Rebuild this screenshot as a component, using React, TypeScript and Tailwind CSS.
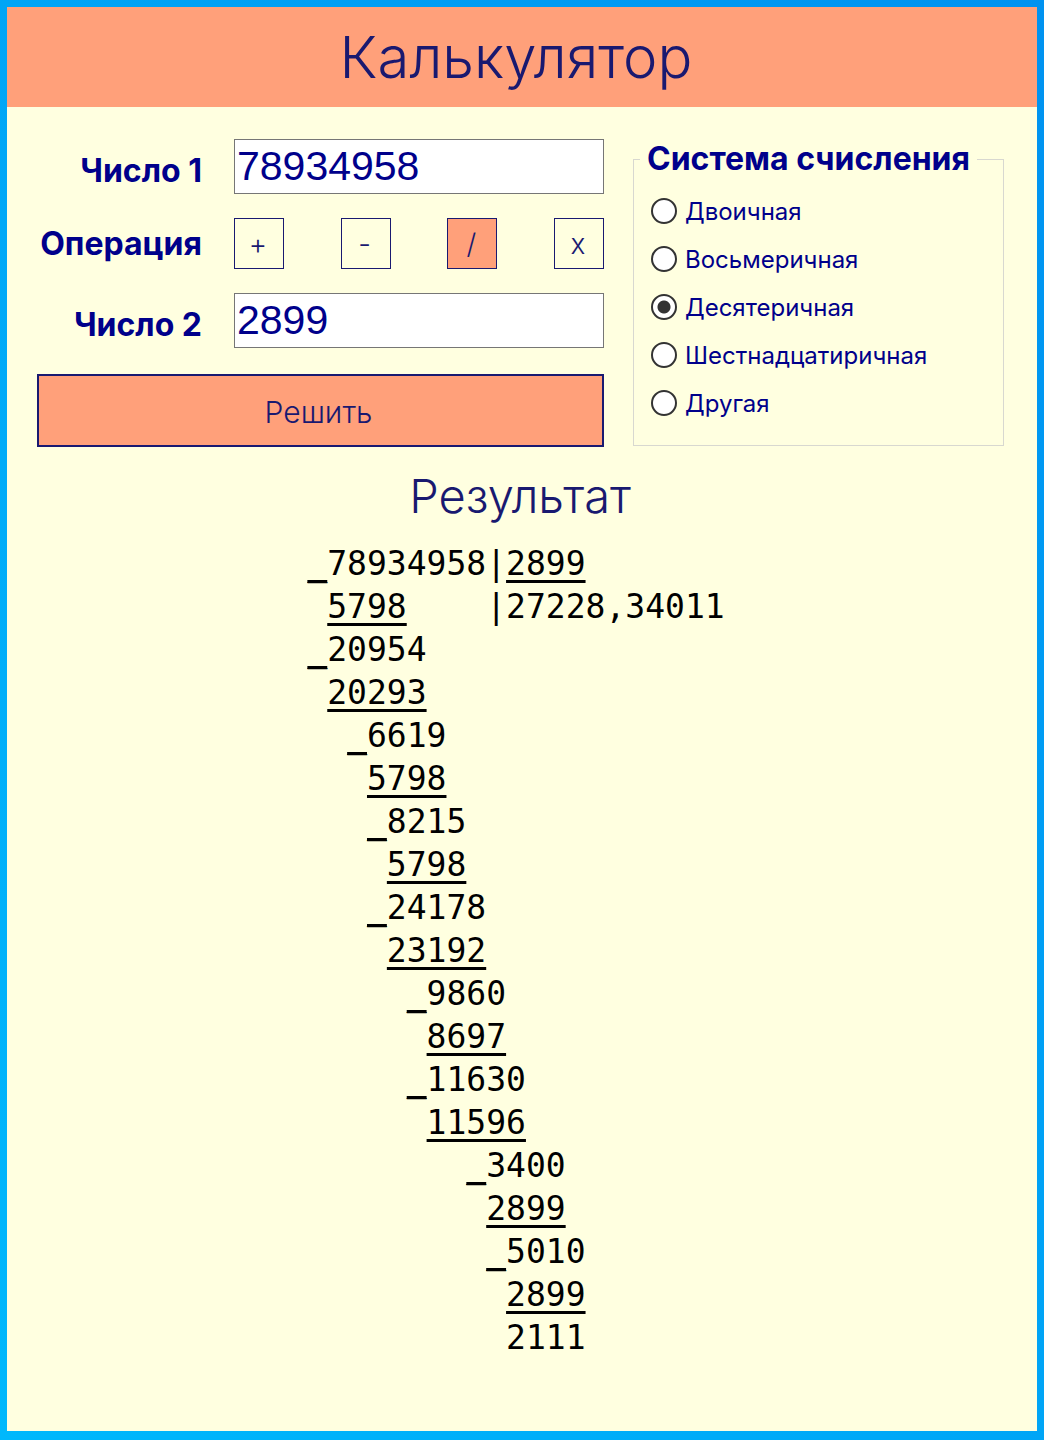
import { useState } from "react";

const OPERATIONS = ["+", "-", "/", "x"];

const SYSTEMS = ["Двоичная", "Восьмеричная", "Десятеричная", "Шестнадцатиричная", "Другая"];

type Step = { indent: number; text: string; minus?: boolean; line?: boolean };

const STEPS: Step[] = [
  { indent: 0, text: "20954", minus: true },
  { indent: 1, text: "20293", line: true },
  { indent: 2, text: "6619", minus: true },
  { indent: 3, text: "5798", line: true },
  { indent: 3, text: "8215", minus: true },
  { indent: 4, text: "5798", line: true },
  { indent: 3, text: "24178", minus: true },
  { indent: 4, text: "23192", line: true },
  { indent: 5, text: "9860", minus: true },
  { indent: 6, text: "8697", line: true },
  { indent: 5, text: "11630", minus: true },
  { indent: 6, text: "11596", line: true },
  { indent: 8, text: "3400", minus: true },
  { indent: 9, text: "2899", line: true },
  { indent: 9, text: "5010", minus: true },
  { indent: 10, text: "2899", line: true },
  { indent: 10, text: "2111" },
];

function Line({ children }: { children: string }) {
  return (
    <span className="underline decoration-[3px] underline-offset-[5px] [text-decoration-skip-ink:none]">
      {children}
    </span>
  );
}

function NumberField({ id, label, value, onChange }: { id: string; label: string; value: string; onChange: (v: string) => void }) {
  return (
    <>
      <label htmlFor={id} className="pt-2 text-right text-[32px] font-bold leading-10 whitespace-nowrap">
        {label}
      </label>
      <input
        id={id}
        type="text"
        value={value}
        onChange={(e) => onChange(e.target.value)}
        className="h-[55px] w-full min-w-0 border border-[#767676] bg-white px-0.5 font-['Liberation_Sans',sans-serif] text-[41px] leading-none text-[#00008b]"
      />
    </>
  );
}

export default function App() {
  const [first, setFirst] = useState("78934958");
  const [second, setSecond] = useState("2899");
  const [operation, setOperation] = useState("/");
  const [system, setSystem] = useState("Десятеричная");

  return (
    <div className="flex min-h-screen flex-col bg-linear-to-tr from-[#00b8fc] to-[#0092f0] px-[7px] pt-[7px] pb-[9px] font-['Inter',sans-serif]">
      <div className="flex-1 bg-[#ffffe0] text-[#00008b]">
        <header className="flex h-[100px] items-center justify-center bg-[#ffa07a] pr-3">
          <h1 className="text-[58px] font-light text-[#191970]">Калькулятор</h1>
        </header>

        <main>
          <div className="grid grid-cols-[567fr_371fr] gap-x-[29px] pt-8 pr-[33px] pl-[30px]">
            <form onSubmit={(e) => e.preventDefault()}>
              <div className="grid grid-cols-[165px_1fr] items-center gap-x-8 gap-y-6">
                <NumberField id="first" label="Число 1" value={first} onChange={setFirst} />
                <span id="operation" className="text-right text-[32px] font-bold leading-10 whitespace-nowrap">
                  Операция
                </span>
                <div role="group" aria-labelledby="operation" className="flex justify-between">
                  {OPERATIONS.map((op) => (
                    <button
                      key={op}
                      type="button"
                      aria-pressed={op === operation}
                      onClick={() => setOperation(op)}
                      className={`flex h-[51px] w-[50px] items-center justify-center border border-[#191970] pr-0.5 text-[28px] font-light text-[#191970] ${
                        op === operation ? "bg-[#ffa07a]" : ""
                      }`}
                    >
                      {op}
                    </button>
                  ))}
                </div>
                <NumberField id="second" label="Число 2" value={second} onChange={setSecond} />
              </div>
              <button
                type="submit"
                className="mt-[26px] h-[73px] w-full border-2 border-[#191970] bg-[#ffa07a] pt-1 pr-1 text-[30px] font-light text-[#191970]"
              >
                Решить
              </button>
            </form>

            <fieldset className="h-[307px] min-w-0 border border-[#d8d8d0] px-[6px]">
              <legend className="px-[7px] text-[32px] font-bold leading-10 whitespace-nowrap">Система счисления</legend>
              <div className="flex flex-col px-[11px] pt-2">
                {SYSTEMS.map((name) => (
                  <label key={name} className="flex h-12 items-center gap-2 text-[24px] whitespace-nowrap">
                    <input
                      type="radio"
                      name="system"
                      checked={name === system}
                      onChange={() => setSystem(name)}
                      className="size-[26px] shrink-0 appearance-none rounded-full border-2 border-[#333333] bg-white checked:bg-[radial-gradient(circle,#333333_6px,#ffffff_7px)]"
                    />
                    <span className="pt-0.5">{name}</span>
                  </label>
                ))}
              </div>
            </fieldset>
          </div>

          <h2 className="mt-5 pr-1 text-center text-[47px] leading-[58px] font-light text-[#191970]">Результат</h2>

          <div className="mt-[17px] flex justify-center pr-3">
            <pre className="font-['DejaVu_Sans_Mono',monospace] text-[33px] leading-[43px] text-black">
              <Line>_</Line>78934958|<Line>2899</Line>
              {"\n "}
              <Line>5798</Line>
              {"    |27228,34011\n"}
              {STEPS.map((step, i) => (
                <span key={i}>
                  {" ".repeat(step.indent)}
                  {step.minus && <Line>_</Line>}
                  {step.line ? <Line>{step.text}</Line> : step.text}
                  {"\n"}
                </span>
              ))}
            </pre>
          </div>
        </main>
      </div>
    </div>
  );
}
